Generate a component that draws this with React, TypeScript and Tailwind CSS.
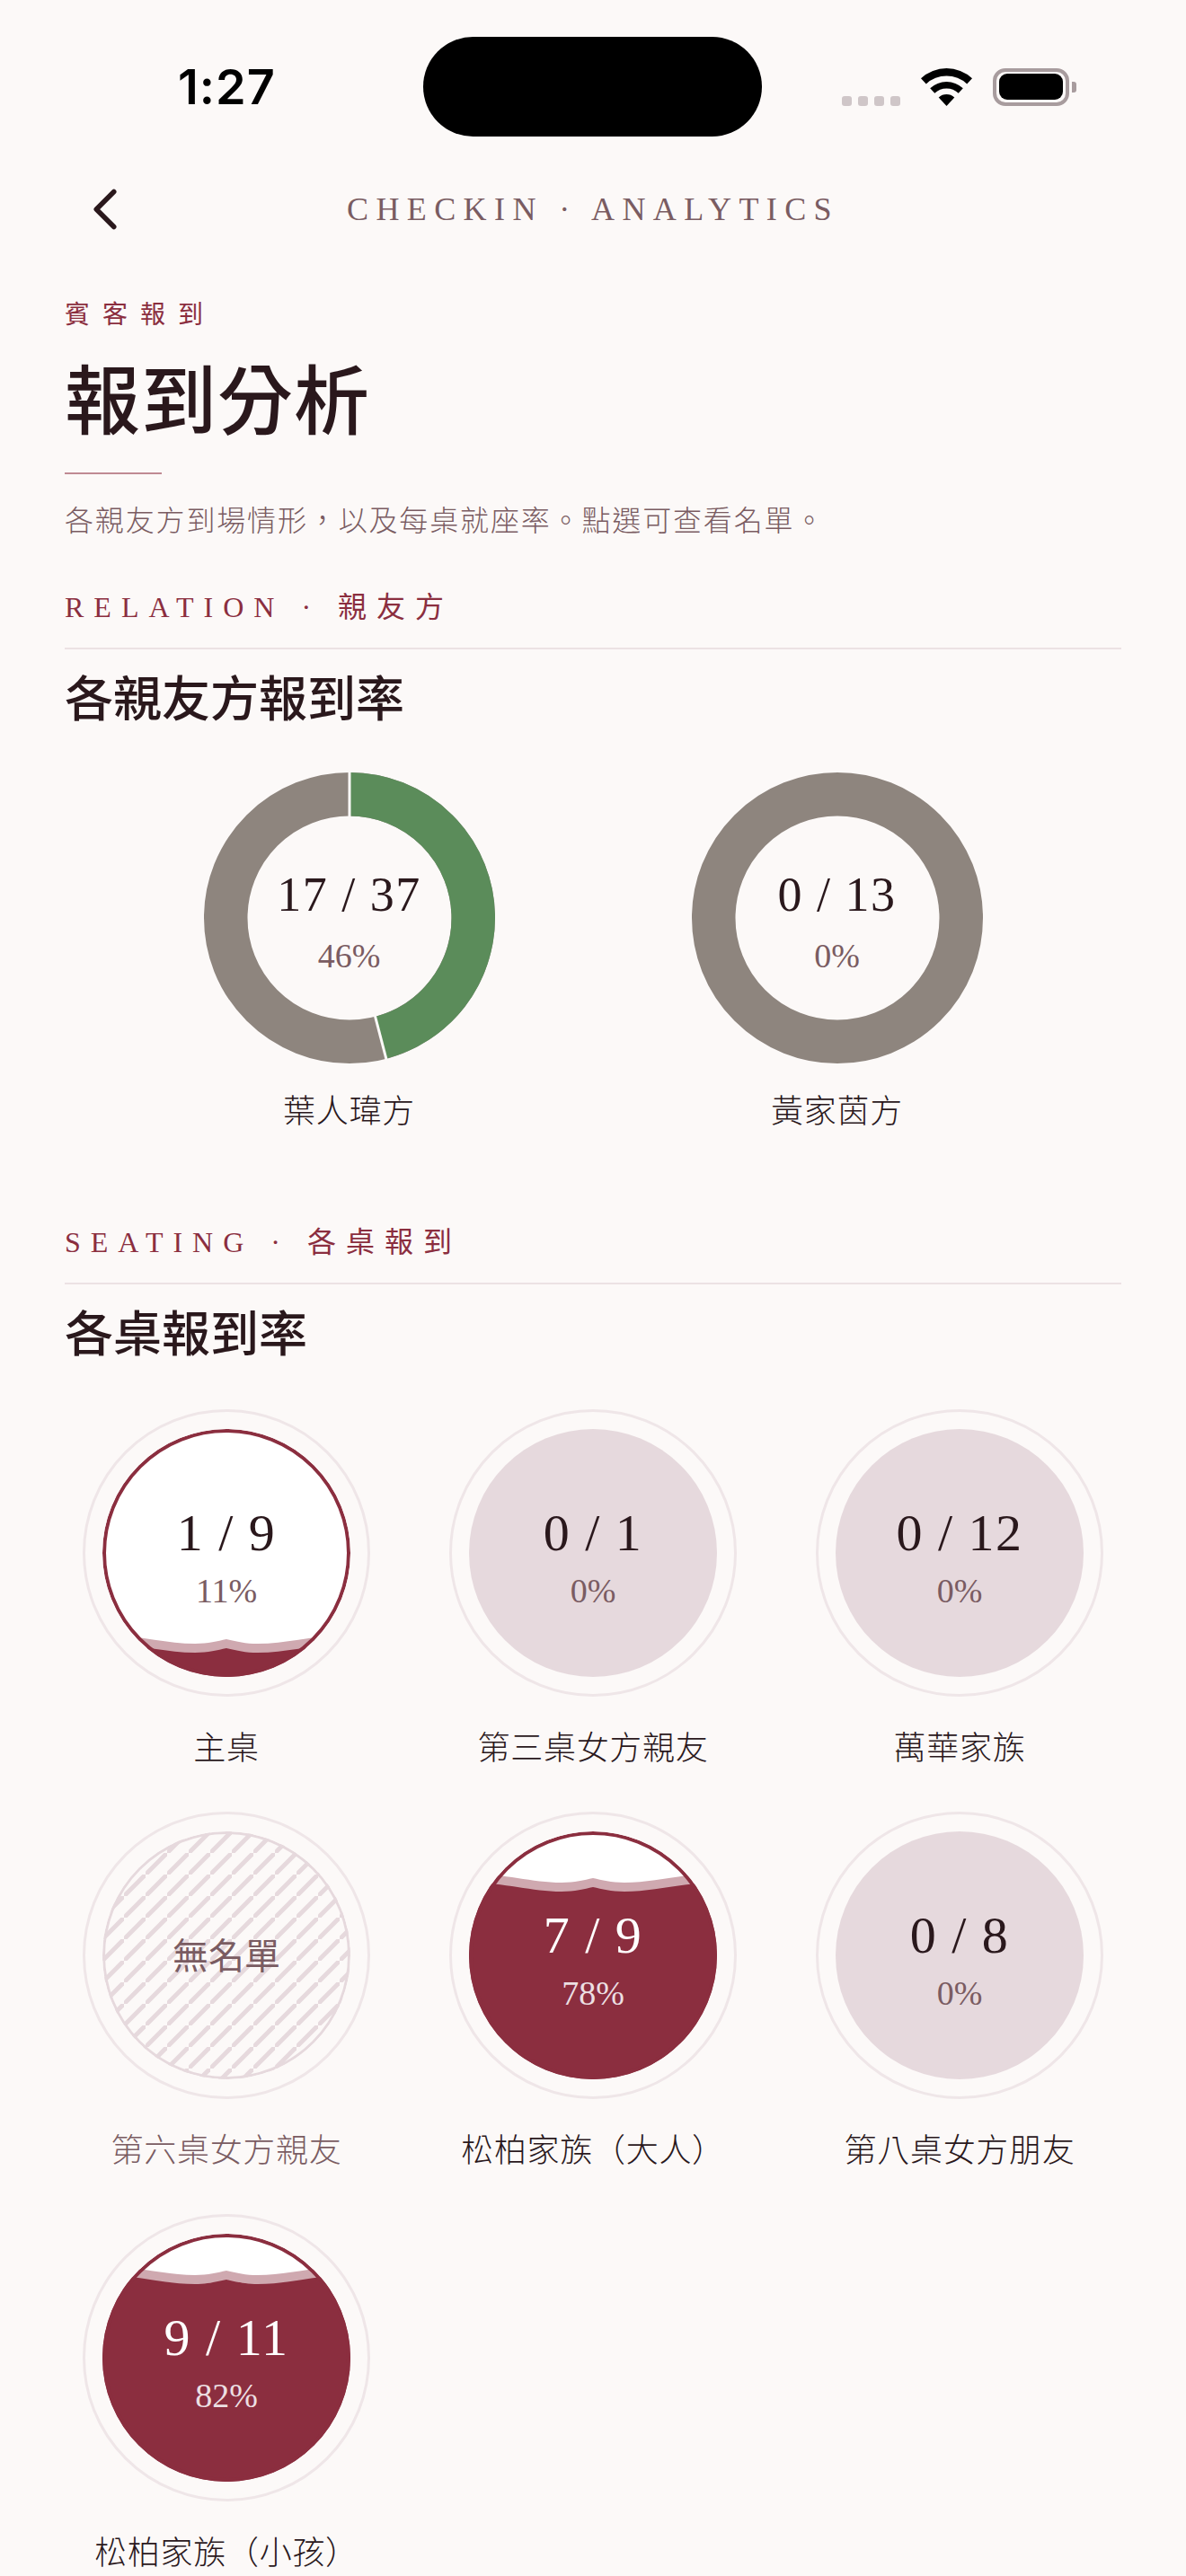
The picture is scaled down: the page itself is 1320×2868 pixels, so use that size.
import { ChevronLeft } from 'lucide-react'

const serif = "font-['Liberation_Serif','Noto_Sans_CJK_TC',serif]"

type Table = {
  name: string
  count?: string
  pct?: string
  waveTop?: number
}

const tables: Table[] = [
  { name: '主桌', count: '1 / 9', pct: '11%', waveTop: 249 },
  { name: '第三桌女方親友', count: '0 / 1', pct: '0%' },
  { name: '萬華家族', count: '0 / 12', pct: '0%' },
  { name: '第六桌女方親友' },
  { name: '松柏家族\uFF08大人\uFF09', count: '7 / 9', pct: '78%', waveTop: 67 },
  { name: '第八桌女方朋友', count: '0 / 8', pct: '0%' },
  { name: '松柏家族\uFF08小孩\uFF09', count: '9 / 11', pct: '82%', waveTop: 56 },
]

const intro = '各親友方到場情形\uFF0C以及每桌就座率。點選可查看名單。'

function wavePath(t: number) {
  return `M0 ${t - 10} C40 ${t - 10} 70 ${t} 103 ${t} C118 ${t} 128 ${t - 3} 138 ${t - 5} C148 ${t - 3} 158 ${t} 173 ${t} C206 ${t} 236 ${t - 10} 276 ${t - 10} L276 276 L0 276 Z`
}

function Wave({ top }: { top: number }) {
  return (
    <svg viewBox="0 0 276 276" className="absolute inset-0 h-full w-full">
      <path d={wavePath(top - 10)} fill="#cfa9b0" />
      <path d={wavePath(top)} fill="#8b2e3f" />
    </svg>
  )
}

function Hatch() {
  return (
    <svg viewBox="0 0 276 276" className="absolute inset-0 h-full w-full">
      <defs>
        <pattern id="hatch" width="24" height="24" patternUnits="userSpaceOnUse">
          <line x1="0" y1="24" x2="24" y2="0" stroke="#e6d9dd" strokeWidth="5" />
        </pattern>
      </defs>
      <rect width="276" height="276" fill="url(#hatch)" />
    </svg>
  )
}

function TableCircle({ table }: { table: Table }) {
  const empty = !table.count
  const zero = table.pct === '0%'
  const high = (table.waveTop ?? 999) < 134

  let inner = 'bg-white'
  if (zero) inner = 'bg-[#e6d9dd]'
  if (empty) inner = 'bg-[#fcf9f8]'

  return (
    <div className="flex flex-col items-center">
      <div className="flex h-[320px] w-[320px] items-center justify-center rounded-full border-[3px] border-[#efe6e8]">
        <div className={`relative flex h-[276px] w-[276px] items-center justify-center overflow-hidden rounded-full ${inner}`}>
          {table.waveTop !== undefined && <Wave top={table.waveTop} />}
          {table.waveTop !== undefined && <div className="absolute inset-0 rounded-full border-[4.5px] border-[#8b2e3f]" />}
          {empty && <Hatch />}
          {empty && <div className="absolute inset-0 rounded-full border-[3px] border-[#e6d9dd]" />}
          {empty ? (
            <span className="relative pt-[3px] text-[40px] leading-[48px] text-[#7a5c62]">無名單</span>
          ) : (
            <div className="relative flex flex-col items-center pt-[9px]">
              <span className={`text-[58px] leading-[66px] tracking-[1.5px] ${high ? 'text-white' : 'text-[#2a181c]'}`}>{table.count}</span>
              <span className={`mt-[9px] text-[38px] leading-[44px] ${high ? 'text-[#ecdfe2]' : 'text-[#7a5c62]'}`}>{table.pct}</span>
            </div>
          )}
        </div>
      </div>
      <span className={`mt-[36px] text-[36px] leading-[44px] font-light tracking-[0.7px] ${empty ? 'text-[#7a5c62]' : 'text-[#2a181c]'}`}>{table.name}</span>
    </div>
  )
}

function Donut({ count, pct, name, fill }: { count: string; pct: string; name: string; fill: number }) {
  const r = 137.75
  const c = 2 * Math.PI * r
  const angle = fill * 2 * Math.PI
  return (
    <div className="flex w-[324px] flex-col items-center">
      <div className="relative flex h-[324px] w-[324px] items-center justify-center">
        <svg viewBox="0 0 324 324" className="absolute inset-0 h-full w-full">
          <circle cx="162" cy="162" r={r} fill="none" stroke="#8e857e" strokeWidth="48.5" />
          {fill > 0 && (
            <>
              <circle
                cx="162"
                cy="162"
                r={r}
                fill="none"
                stroke="#5b8c5a"
                strokeWidth="48.5"
                strokeDasharray={`${c * fill} ${c}`}
                transform="rotate(-90 162 162)"
              />
              <line x1="162" y1="0" x2="162" y2="50" stroke="#fcf9f8" strokeWidth="3" />
              <line
                x1={162 + 112 * Math.sin(angle)}
                y1={162 - 112 * Math.cos(angle)}
                x2={162 + 164 * Math.sin(angle)}
                y2={162 - 164 * Math.cos(angle)}
                stroke="#fcf9f8"
                strokeWidth="3"
              />
            </>
          )}
        </svg>
        <div className="relative flex flex-col items-center pt-[6px]">
          <span className="text-[54px] leading-[64px] tracking-[1.5px] text-[#2a181c]">{count}</span>
          <span className="mt-[14px] text-[38px] leading-[44px] text-[#7a5c62]">{pct}</span>
        </div>
      </div>
      <span className="mt-[32px] text-[36px] leading-[44px] font-light tracking-[0.7px] text-[#2a181c]">{name}</span>
    </div>
  )
}

function SectionHead({ eyebrow, title }: { eyebrow: string; title: string }) {
  return (
    <div>
      <div className="border-b-2 border-[#ece2e4] pb-[23px] text-[32px] leading-[44px] tracking-[11px] text-[#8b2e3f]">{eyebrow}</div>
      <h2 className="mt-[22px] text-[54px] leading-[70px] font-medium text-[#2a181c]">{title}</h2>
    </div>
  )
}

export default function App() {
  return (
    <div className={`h-[2868px] w-full overflow-hidden bg-[#fcf9f8] ${serif}`}>
      {/* Status bar */}
      <div className="flex items-center pt-[41px] pl-[198px]">
        <span className="w-[273px] font-['Inter',sans-serif] text-[54px] leading-[60px] font-semibold tracking-[1px] text-black">1:27</span>
        <div className="h-[111px] w-[377px] rounded-[56px] bg-black" />
        <div className="flex items-center pl-[89px]">
          <div className="flex gap-[7px] self-end">
            <span className="h-[11px] w-[11px] rounded-[3px] bg-[#cfc6c8]" />
            <span className="h-[11px] w-[11px] rounded-[3px] bg-[#cfc6c8]" />
            <span className="h-[11px] w-[11px] rounded-[3px] bg-[#cfc6c8]" />
            <span className="h-[11px] w-[11px] rounded-[3px] bg-[#cfc6c8]" />
          </div>
          <svg viewBox="0 0 57 42" className="ml-[23px] h-[42px] w-[57px]" fill="black">
            <path d="M0 11.2 A42 42 0 0 1 57 11.2 L51.2 17.4 A33.5 33.5 0 0 0 5.8 17.4 Z" />
            <path d="M10.2 22.2 A27 27 0 0 1 46.8 22.2 L41.7 27.7 A19.5 19.5 0 0 0 15.3 27.7 Z" />
            <path d="M19.7 32.5 A13 13 0 0 1 37.3 32.5 L28.5 42 Z" />
          </svg>
          <div className="ml-[23px] flex h-[42px] w-[85px] items-center justify-center rounded-[14px] border-[4px] border-[#a89c9e]">
            <div className="h-[29px] w-[71px] rounded-[9px] bg-black" />
          </div>
          <div className="ml-[3px] h-[12px] w-[5px] rounded-r-[3px] bg-[#a89c9e]" />
        </div>
      </div>

      {/* Nav */}
      <div className="mt-[42px] grid grid-cols-[78px_1fr_78px] items-center px-[78px]">
        <ChevronLeft size={78} strokeWidth={1.7} className="text-[#2a181c]" />
        <div className="text-center text-[36px] leading-[78px] tracking-[8.4px] text-[#7a5c62]">CHECKIN · ANALYTICS</div>
      </div>

      <main className="px-[72px]">
        <div className="mt-[61px] text-[28px] leading-[36px] tracking-[14px] text-[#8b2e3f]">賓客報到</div>
        <h1 className="mt-[30px] text-[84px] leading-[100px] font-medium tracking-[1px] text-[#2a181c]">報到分析</h1>
        <div className="mt-[27px] h-[2px] w-[108px] bg-[#c08a93]" />
        <p className="mt-[32px] text-[32px] leading-[40px] font-light tracking-[1.85px] text-[#7a5c62]">{intro}</p>

        <div className="mt-[54px]">
          <SectionHead eyebrow="RELATION · 親友方" title="各親友方報到率" />
        </div>
        <div className="mt-[45px] flex justify-center gap-[219px]">
          <Donut count="17 / 37" pct="46%" name="葉人瑋方" fill={17 / 37} />
          <Donut count="0 / 13" pct="0%" name="黃家茵方" fill={0} />
        </div>

        <div className="mt-[101px]">
          <SectionHead eyebrow="SEATING · 各桌報到" title="各桌報到率" />
        </div>
        <div className="mt-[47px] grid grid-cols-3 gap-x-[48px] gap-y-[48px]">
          {tables.map(t => (
            <TableCircle key={t.name} table={t} />
          ))}
        </div>
      </main>
    </div>
  )
}
